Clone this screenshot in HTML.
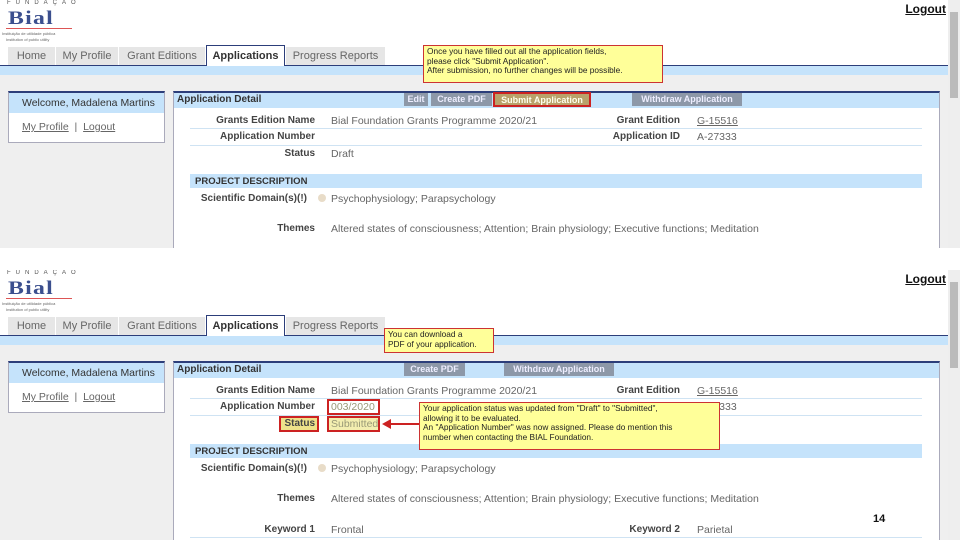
<!DOCTYPE html><html><head><meta charset="utf-8"><style>
*{margin:0;padding:0;box-sizing:border-box}
body{width:960px;height:540px;overflow:hidden;background:#fff;font-family:"Liberation Sans",Arial,sans-serif;position:relative}
.s{position:absolute;left:0;width:960px;height:248px;overflow:hidden;background:#fff}
.a{position:absolute;white-space:nowrap}
.f{font-size:6px;letter-spacing:5px;color:#555;left:7px;top:0}
.bial{left:8px;top:8px;font:bold 19px "Liberation Serif",serif;color:#3b4f8e;letter-spacing:1px;transform:scaleX(1.25);transform-origin:left}
.red{left:6px;top:28px;width:66px;height:1px;background:#d55}
.tiny{font-size:4px;color:#666;left:2px}
.tab{position:absolute;top:47px;height:19px;background:#e6e6e6;font-size:11px;color:#666;text-align:center;line-height:18px;border-bottom:1px solid #2c3e7a}
.tab.on{top:45px;height:21px;background:#fff;color:#333;font-weight:bold;border:1px solid #2c3e7a;border-bottom:none;line-height:20px}
.l{font-size:10px;font-weight:bold;color:#444;text-align:right;width:160px}
.v{font-size:10.5px;color:#666}
.btn{position:absolute;top:93px;height:13px;background:#8d98a8;color:#eef;font-size:9px;font-weight:bold;line-height:13px;text-align:center}
.tip{position:absolute;background:#ffff99;border:1px solid #c33;font-size:8.3px;line-height:9.5px;color:#222;padding:1px 3px}
.box{position:absolute;border:2px solid #c22}
</style></head><body>

<!-- TOP -->
<div class="s" style="top:0">
<div class="a f">FUNDAÇÃO</div>
<div class="a bial">Bial</div>
<div class="a red"></div>
<div class="a tiny" style="top:31px">Instituição de utilidade pública</div>
<div class="a tiny" style="top:37px;left:6px">Institution of public utility</div>
<div class="a" style="right:14px;top:2px;font-size:12px;font-weight:bold;text-decoration:underline;color:#111">Logout</div>
<div class="a" style="left:948px;top:0;width:12px;height:248px;background:#eee"></div>
<div class="a" style="left:950px;top:12px;width:8px;height:86px;background:#bbb"></div>
<div class="a" style="left:0;top:65px;width:948px;height:1px;background:#2c3e7a"></div>
<div class="a" style="left:0;top:66px;width:948px;height:9px;background:#c5e3fb"></div>
<div class="a" style="left:0;top:75px;width:948px;height:173px;background:#efefef"></div>
<div class="tab" style="left:8px;width:47px">Home</div>
<div class="tab" style="left:56px;width:62px">My Profile</div>
<div class="tab" style="left:119px;width:86px">Grant Editions</div>
<div class="tab on" style="left:206px;width:79px">Applications</div>
<div class="tab" style="left:286px;width:99px">Progress Reports</div>
<div class="a" style="left:8px;top:91px;width:157px;height:52px;background:#fff;border:1px solid #aab;border-top:2px solid #2c3e7a"></div>
<div class="a" style="left:9px;top:93px;width:155px;height:20px;background:#c5e3fb"></div>
<div class="a" style="left:22px;top:97px;font-size:10.5px;color:#333">Welcome, Madalena Martins</div>
<div class="a" style="left:22px;top:121px;font-size:10.5px;color:#666"><u>My Profile</u> &nbsp;|&nbsp; <u>Logout</u></div>
<div class="a" style="left:173px;top:91px;width:767px;height:160px;background:#fff;border-left:1px solid #aab;border-right:1px solid #aab;border-top:2px solid #2c3e7a"></div>
<div class="a" style="left:174px;top:93px;width:765px;height:15px;background:#c5e3fb"></div>
<div class="a" style="left:177px;top:94px;font-size:10px;font-weight:bold;color:#333">Application Detail</div>
<div class="btn" style="left:404px;width:24px">Edit</div>
<div class="btn" style="left:431px;width:61px">Create PDF</div>
<div class="btn" style="left:493px;width:98px;background:#b9a26a;color:#ffe;border:2px solid #c22;top:92px;height:15px">Submit Application</div>
<div class="btn" style="left:632px;width:110px">Withdraw Application</div>
<div class="a" style="left:190px;top:128px;width:732px;height:1px;background:#cfe3f3"></div>
<div class="a" style="left:190px;top:145px;width:732px;height:1px;background:#cfe3f3"></div>
<div class="a l" style="left:155px;top:115px">Grants Edition Name</div>
<div class="a v" style="left:331px;top:115px">Bial Foundation Grants Programme 2020/21</div>
<div class="a l" style="left:520px;top:115px">Grant Edition</div>
<div class="a v" style="left:697px;top:115px;text-decoration:underline">G-15516</div>
<div class="a l" style="left:155px;top:131px">Application Number</div>
<div class="a l" style="left:520px;top:131px">Application ID</div>
<div class="a v" style="left:697px;top:131px">A-27333</div>
<div class="a l" style="left:155px;top:148px">Status</div>
<div class="a v" style="left:331px;top:148px">Draft</div>
<div class="a" style="left:190px;top:174px;width:732px;height:14px;background:#c5e3fb"></div>
<div class="a" style="left:195px;top:176px;font-size:9.5px;font-weight:bold;color:#333">PROJECT DESCRIPTION</div>
<div class="a l" style="left:155px;top:193px;width:152px">Scientific Domain(s)(!)</div>
<div class="a" style="left:318px;top:194px;width:8px;height:8px;border-radius:50%;background:#e8dcc8"></div>
<div class="a v" style="left:331px;top:193px">Psychophysiology; Parapsychology</div>
<div class="a l" style="left:155px;top:223px">Themes</div>
<div class="a v" style="left:331px;top:223px">Altered states of consciousness; Attention; Brain physiology; Executive functions; Meditation</div>
<div class="tip" style="left:423px;top:45px;width:240px;height:38px">Once you have filled out all the application fields,<br>please click "Submit Application".<br>After submission, no further changes will be possible.</div>
</div>

<!-- BOTTOM -->
<div class="s" style="top:270px;height:270px">
<div class="a f">FUNDAÇÃO</div>
<div class="a bial">Bial</div>
<div class="a red"></div>
<div class="a tiny" style="top:31px">Instituição de utilidade pública</div>
<div class="a tiny" style="top:37px;left:6px">Institution of public utility</div>
<div class="a" style="right:14px;top:2px;font-size:12px;font-weight:bold;text-decoration:underline;color:#111">Logout</div>
<div class="a" style="left:948px;top:0;width:12px;height:270px;background:#eee"></div>
<div class="a" style="left:950px;top:12px;width:8px;height:86px;background:#bbb"></div>
<div class="a" style="left:0;top:65px;width:948px;height:1px;background:#2c3e7a"></div>
<div class="a" style="left:0;top:66px;width:948px;height:9px;background:#c5e3fb"></div>
<div class="a" style="left:0;top:75px;width:948px;height:195px;background:#efefef"></div>
<div class="tab" style="left:8px;width:47px">Home</div>
<div class="tab" style="left:56px;width:62px">My Profile</div>
<div class="tab" style="left:119px;width:86px">Grant Editions</div>
<div class="tab on" style="left:206px;width:79px">Applications</div>
<div class="tab" style="left:286px;width:99px">Progress Reports</div>
<div class="a" style="left:8px;top:91px;width:157px;height:52px;background:#fff;border:1px solid #aab;border-top:2px solid #2c3e7a"></div>
<div class="a" style="left:9px;top:93px;width:155px;height:20px;background:#c5e3fb"></div>
<div class="a" style="left:22px;top:97px;font-size:10.5px;color:#333">Welcome, Madalena Martins</div>
<div class="a" style="left:22px;top:121px;font-size:10.5px;color:#666"><u>My Profile</u> &nbsp;|&nbsp; <u>Logout</u></div>
<div class="a" style="left:173px;top:91px;width:767px;height:185px;background:#fff;border-left:1px solid #aab;border-right:1px solid #aab;border-top:2px solid #2c3e7a"></div>
<div class="a" style="left:174px;top:93px;width:765px;height:15px;background:#c5e3fb"></div>
<div class="a" style="left:177px;top:94px;font-size:10px;font-weight:bold;color:#333">Application Detail</div>
<div class="btn" style="left:404px;width:61px">Create PDF</div>
<div class="btn" style="left:504px;width:110px">Withdraw Application</div>
<div class="a" style="left:190px;top:128px;width:732px;height:1px;background:#cfe3f3"></div>
<div class="a" style="left:190px;top:145px;width:732px;height:1px;background:#cfe3f3"></div>
<div class="a l" style="left:155px;top:115px">Grants Edition Name</div>
<div class="a v" style="left:331px;top:115px">Bial Foundation Grants Programme 2020/21</div>
<div class="a l" style="left:520px;top:115px">Grant Edition</div>
<div class="a v" style="left:697px;top:115px;text-decoration:underline">G-15516</div>
<div class="a l" style="left:155px;top:131px">Application Number</div>
<div class="a v" style="left:331px;top:131px;color:#997">003/2020</div>
<div class="box" style="left:327px;top:129px;width:53px;height:16px"></div>
<div class="a v" style="left:697px;top:131px">A-27333</div>
<div class="box" style="left:279px;top:146px;width:40px;height:16px;background:#eee28a"></div>
<div class="a l" style="left:155px;top:148px">Status</div>
<div class="box" style="left:327px;top:146px;width:53px;height:16px;background:#f3eeb0"></div>
<div class="a v" style="left:331px;top:148px;color:#997">Submitted</div>
<div class="a" style="left:390px;top:153px;width:30px;height:2px;background:#c22"></div>
<div class="a" style="left:382px;top:149px;width:0;height:0;border-top:5px solid transparent;border-bottom:5px solid transparent;border-right:9px solid #c22"></div>
<div class="a" style="left:190px;top:174px;width:732px;height:14px;background:#c5e3fb"></div>
<div class="a" style="left:195px;top:176px;font-size:9.5px;font-weight:bold;color:#333">PROJECT DESCRIPTION</div>
<div class="a l" style="left:155px;top:193px;width:152px">Scientific Domain(s)(!)</div>
<div class="a" style="left:318px;top:194px;width:8px;height:8px;border-radius:50%;background:#e8dcc8"></div>
<div class="a v" style="left:331px;top:193px">Psychophysiology; Parapsychology</div>
<div class="a l" style="left:155px;top:223px">Themes</div>
<div class="a v" style="left:331px;top:223px">Altered states of consciousness; Attention; Brain physiology; Executive functions; Meditation</div>
<div class="a l" style="left:155px;top:254px">Keyword 1</div>
<div class="a v" style="left:331px;top:254px">Frontal</div>
<div class="a l" style="left:520px;top:254px">Keyword 2</div>
<div class="a v" style="left:697px;top:254px">Parietal</div>
<div class="a" style="left:190px;top:267px;width:732px;height:1px;background:#cfe3f3"></div>
<div class="a" style="left:873px;top:243px;font-size:11px;font-weight:bold;color:#111">14</div>
<div class="tip" style="left:384px;top:58px;width:110px;height:25px">You can download a<br>PDF of your application.</div>
<div class="tip" style="left:419px;top:132px;width:301px;height:48px">Your application status was updated from "Draft" to "Submitted",<br>allowing it to be evaluated.<br>An "Application Number" was now assigned. Please do mention this<br>number when contacting the BIAL Foundation.</div>
</div>
</body></html>
